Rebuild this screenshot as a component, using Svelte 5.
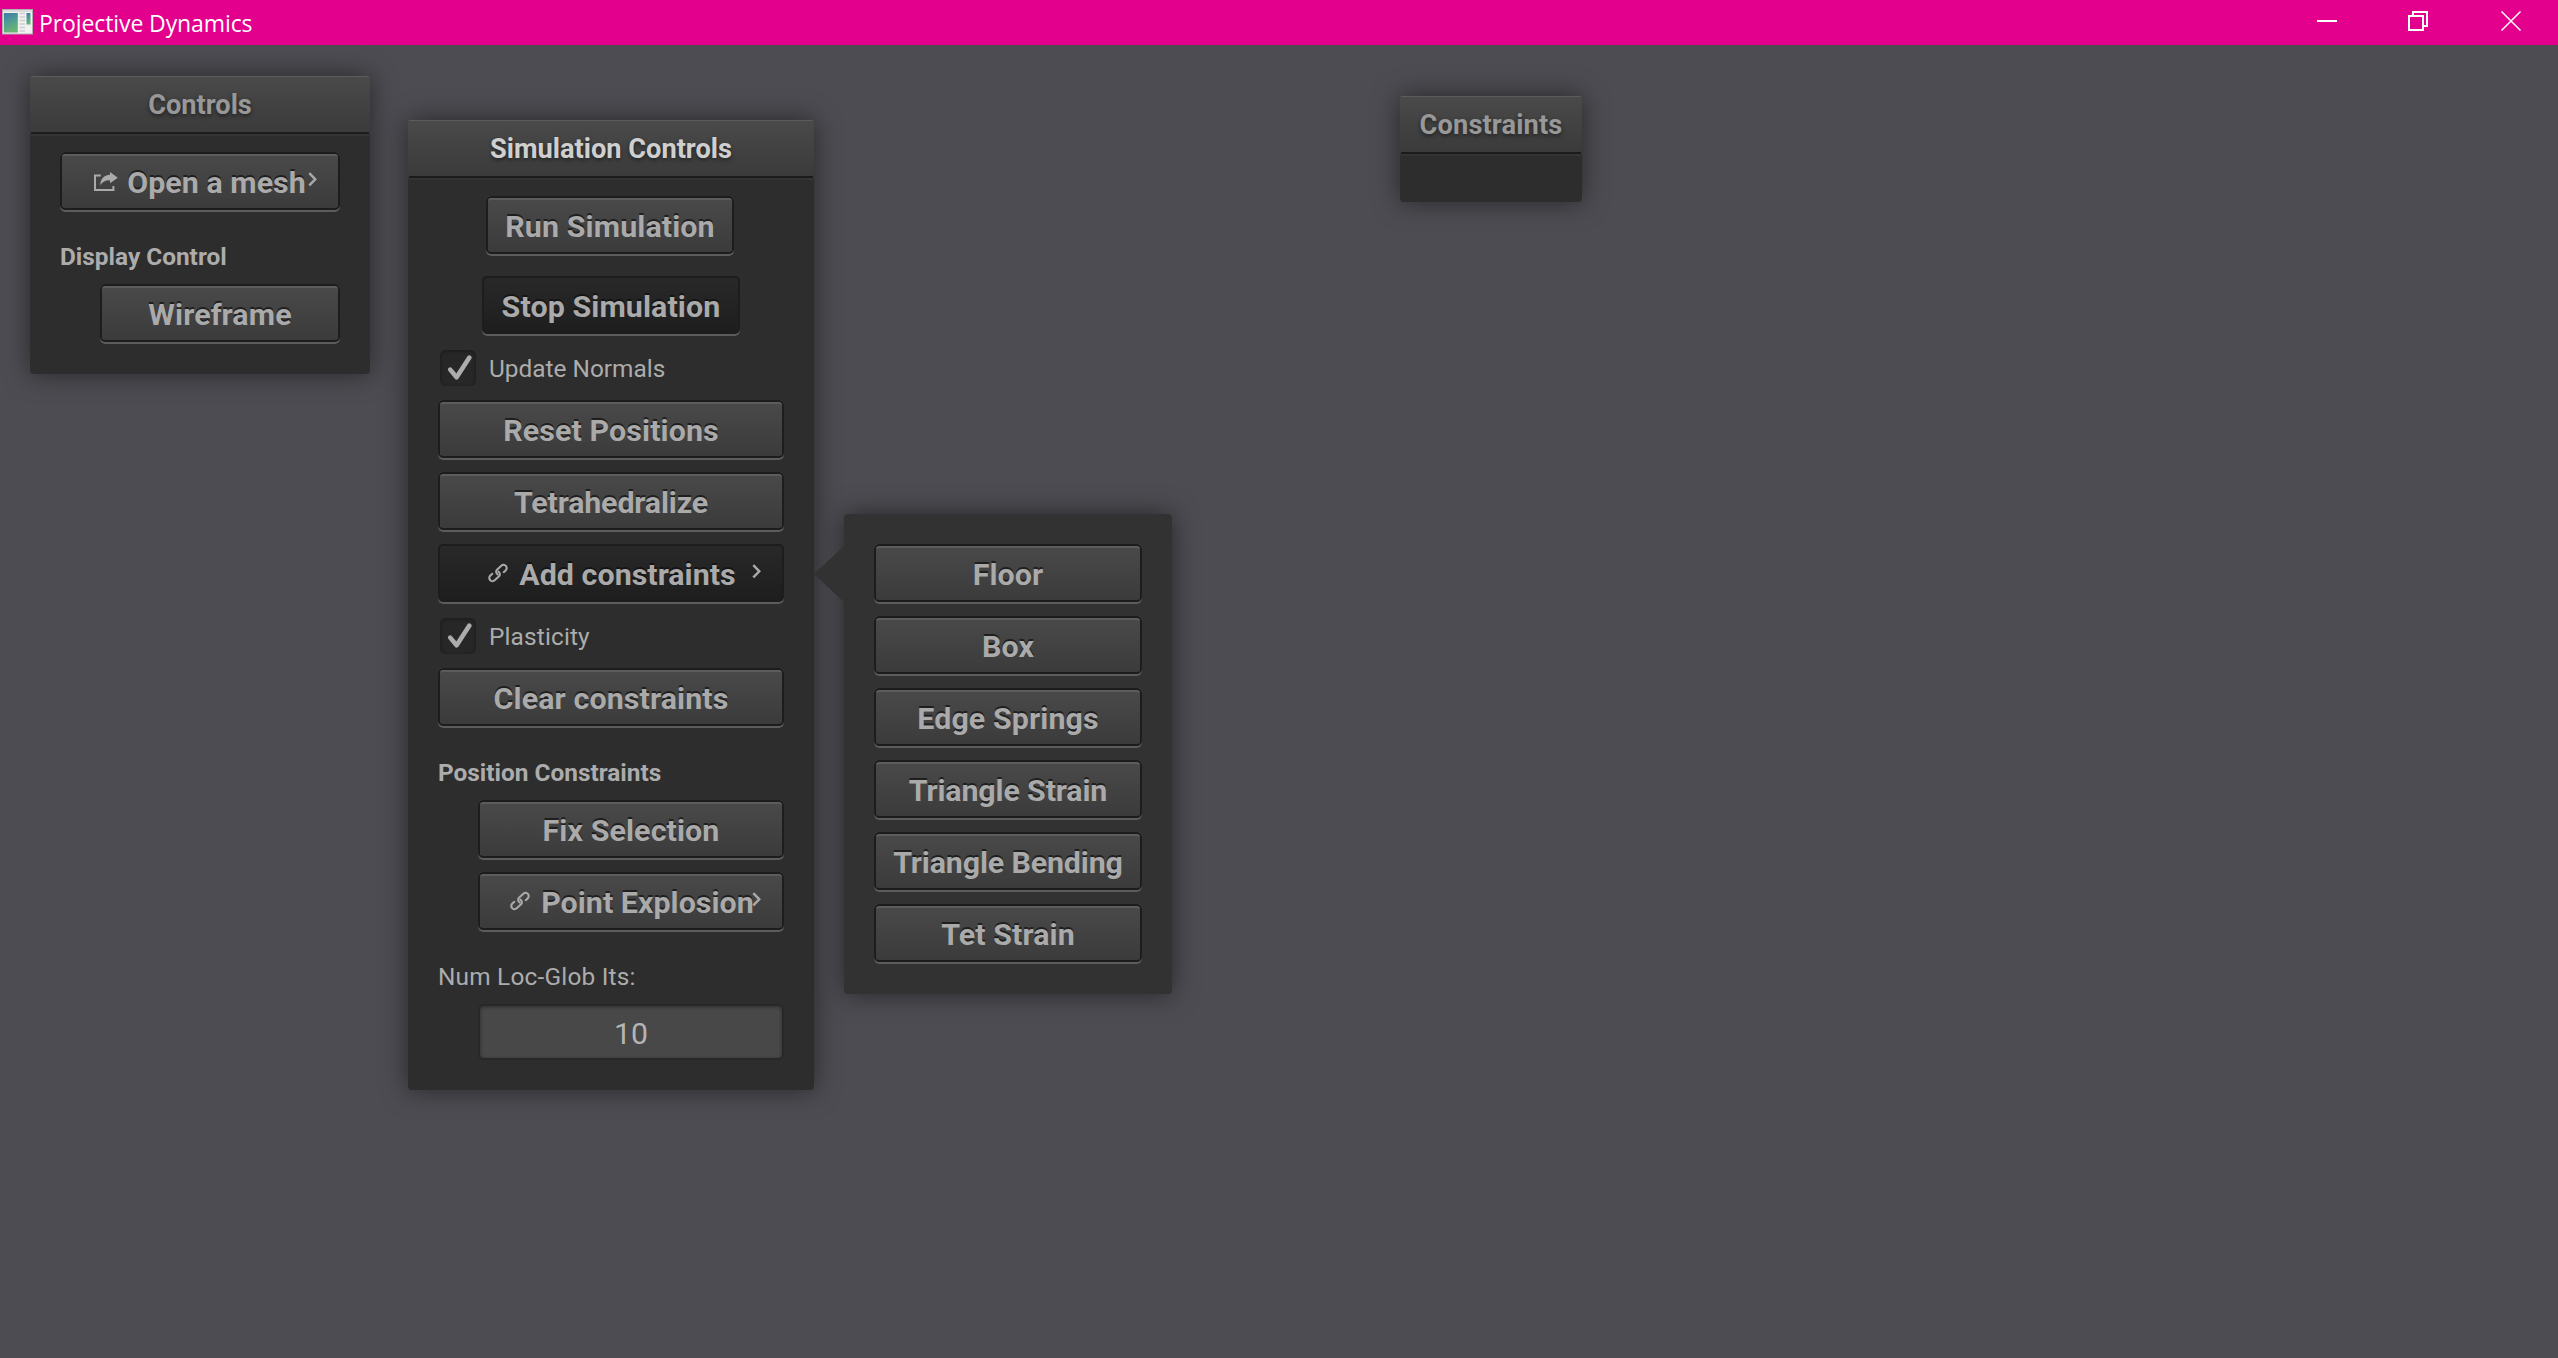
<script>
  const popupItems = [
    { text: 'Floor' },
    { text: 'Box' },
    { text: 'Edge Springs' },
    { text: 'Triangle Strain', snug: true },
    { text: 'Triangle Bending', snug: true },
    { text: 'Tet Strain' }
  ];
</script>

{#snippet share()}
  <svg class="share" viewBox="0 0 24 19" aria-hidden="true">
    <path d="M6.8 3.4H1V18H19.4V14" fill="none" stroke="currentColor" stroke-width="2" />
    <path d="M16 0L23.8 5.7L16 11.2V8.2C11.5 8.1 8.6 9.6 6.2 13.2C6.6 7.2 9.8 3 16 2.7Z" fill="currentColor" />
  </svg>
{/snippet}

{#snippet link()}
  <svg class="link" viewBox="-10 -10 20 20" aria-hidden="true">
    <g transform="rotate(-42)" fill="none" stroke="currentColor" stroke-width="2.1" stroke-linecap="round">
      <path d="M-1.3 0.8A3.2 3.2 0 0 1 1.8 -3.2H7.4A3.2 3.2 0 0 1 7.4 3.2H4.8" />
      <path d="M1.3 -0.8A3.2 3.2 0 0 1 -1.8 3.2H-7.4A3.2 3.2 0 0 1 -7.4 -3.2H-4.8" />
    </g>
  </svg>
{/snippet}

{#snippet chevron()}
  <svg class="chevron" viewBox="0 0 9 15" aria-hidden="true">
    <path d="M1.3 1.2L7.3 7.3L1.3 13.4" fill="none" stroke="currentColor" stroke-width="2.4" />
  </svg>
{/snippet}

{#snippet check(label)}
  <label class="check">
    <span class="box">
      <svg viewBox="0 0 36 36" aria-hidden="true">
        <path d="M10.2 19.6L16.6 27.3L29.4 7.6" fill="none" stroke="currentColor" stroke-width="4.6" stroke-linecap="round" stroke-linejoin="round" />
      </svg>
    </span>
    <span class="check-text">{label}</span>
  </label>
{/snippet}

<div class="screen">
  <header class="titlebar">
    <svg class="app-icon" viewBox="0 0 31 26" aria-hidden="true">
      <defs>
        <linearGradient id="pane" x1="0" y1="0" x2="0.3" y2="1">
          <stop offset="0" stop-color="#3f78a6" />
          <stop offset="0.5" stop-color="#4f9c96" />
          <stop offset="1" stop-color="#68b573" />
        </linearGradient>
      </defs>
      <rect x="0.5" y="0.5" width="30" height="24.5" fill="#f1f1f1" stroke="#b0b0b0" />
      <rect x="1" y="1" width="29" height="2" fill="#dadada" />
      <rect x="1.8" y="4" width="14" height="19.5" fill="url(#pane)" />
      <path d="M17.5 4.5h5.5M17.5 8h5.5M17.5 11.5h5.5M17.5 15h5.5M17.5 18.5h5.5M17.5 22h5.5" stroke="#cfcfcf" stroke-width="1.4" />
      <rect x="24.5" y="4" width="4" height="11.5" fill="url(#pane)" />
    </svg>
    <span class="app-name">Projective Dynamics</span>
    <div class="window-buttons">
      <svg viewBox="0 0 20 20" aria-hidden="true"><path d="M0 10H20" /></svg>
      <svg viewBox="0 0 20 20" aria-hidden="true"><path d="M1 5H15V19H1ZM5 5V1H19V15H15" /></svg>
      <svg class="close" viewBox="0 0 20 20" aria-hidden="true"><path d="M0.5 0.5L19.5 19.5M19.5 0.5L0.5 19.5" /></svg>
    </div>
  </header>

  <main class="desktop">
    <section class="window controls">
      <h2>Controls</h2>
      <div class="body">
        <button class="with-icon">{@render share()}Open a mesh{@render chevron()}</button>
        <h3>Display Control</h3>
        <button class="indent">Wireframe</button>
      </div>
    </section>

    <section class="window simulation focused">
      <h2>Simulation Controls</h2>
      <div class="body">
        <div class="tools">
          <button class="fit">Run Simulation</button>
          <button class="fit wide pushed">Stop Simulation</button>
        </div>
        {@render check('Update Normals')}
        <div class="stack">
          <button>Reset Positions</button>
          <button class="snug">Tetrahedralize</button>
          <button class="with-icon pushed">{@render link()}Add constraints{@render chevron()}</button>
        </div>
        {@render check('Plasticity')}
        <button>Clear constraints</button>
        <h3>Position Constraints</h3>
        <div class="stack indent">
          <button>Fix Selection</button>
          <button class="with-icon">{@render link()}Point Explosion{@render chevron()}</button>
        </div>
        <h3 class="plain">Num Loc-Glob Its:</h3>
        <div class="number indent">10</div>
      </div>
    </section>

    <section class="window popup">
      <div class="stack">
        {#each popupItems as item}
          <button class={{ snug: item.snug }}>{item.text}</button>
        {/each}
      </div>
    </section>

    <section class="window constraints">
      <h2>Constraints</h2>
      <div class="body"></div>
    </section>
  </main>
</div>

<style>
  :global(body) {
    margin: 0;
    background: #4d4c52;
  }

  .screen {
    display: flex;
    flex-direction: column;
    width: 2558px;
    height: 1358px;
    overflow: hidden;
    background: #4d4c52;
    font-family: Roboto, 'Liberation Sans', sans-serif;
    color: #acacac;
  }

  .titlebar {
    display: flex;
    align-items: center;
    box-sizing: border-box;
    flex: none;
    height: 45px;
    padding: 0 37px 0 2px;
    background: #e3008c;
    color: #fff;
  }

  .app-icon {
    width: 31px;
    height: 26px;
    margin-top: -2px;
  }

  .app-name {
    flex: 1;
    margin: 1px 0 0 6px;
    font: 23px/30px 'Open Sans', 'Noto Sans', sans-serif;
    letter-spacing: -0.1px;
  }

  .window-buttons {
    display: flex;
    align-items: center;
    gap: 71px;
    margin-top: -3px;
  }

  .window-buttons svg {
    width: 20px;
    height: 20px;
    fill: none;
    stroke: #fff;
    stroke-width: 2;
    overflow: visible;
  }

  .window-buttons .close {
    margin-left: 2px;
    stroke-width: 1.5;
  }

  .desktop {
    position: relative;
    flex: 1;
  }

  .window {
    position: absolute;
    box-sizing: border-box;
    background: #2d2d2d;
    border-radius: 4px;
    box-shadow: 0 0 26px rgba(0, 0, 0, 0.5);
  }

  .controls {
    left: 30px;
    top: 31px;
    width: 340px;
    height: 298px;
  }

  .simulation {
    left: 408px;
    top: 75px;
    width: 406px;
    height: 970px;
  }

  .popup {
    left: 844px;
    top: 469px;
    width: 328px;
    height: 480px;
    padding: 30px;
    background: #323232;
  }

  .popup::before {
    content: '';
    position: absolute;
    left: -30px;
    top: 32px;
    width: 30px;
    height: 56px;
    background: #323232;
    clip-path: polygon(0 50%, 100% 0, 100% 100%);
  }

  .constraints {
    left: 1400px;
    top: 51px;
    width: 182px;
    height: 106px;
  }

  h2 {
    display: flex;
    align-items: center;
    justify-content: center;
    box-sizing: border-box;
    height: 60px;
    margin: 0;
    padding-bottom: 2px;
    border-radius: 2px 2px 0 0;
    background:
      linear-gradient(#1c1c1c, #1c1c1c) 1px 56px / calc(100% - 2px) 2px no-repeat,
      linear-gradient(#343434, #343434) 1px 58px / calc(100% - 2px) 2px no-repeat,
      linear-gradient(#5c5c5c, #5c5c5c) 0 0 / 100% 1px no-repeat,
      linear-gradient(#4a4a4a, #3a3a3a) 0 0 / 100% 58px no-repeat;
    font-size: 27.2px;
    font-weight: 700;
    line-height: 32px;
    color: #989898;
    text-shadow: 0 2px 4px rgba(0, 0, 0, 0.5);
  }

  .focused h2 {
    color: #cfcfcf;
  }

  .constraints h2 {
    letter-spacing: 0.15px;
  }

  .body {
    display: flex;
    flex-direction: column;
    padding: 16px 30px 30px;
  }

  .tools {
    display: flex;
    flex-direction: column;
    align-items: center;
    gap: 20px;
    margin-bottom: 12px;
  }

  .stack {
    display: flex;
    flex-direction: column;
    gap: 12px;
  }

  button {
    display: flex;
    align-items: center;
    justify-content: center;
    position: relative;
    box-sizing: border-box;
    height: 60px;
    padding: 1px 0 0;
    border: 0;
    border-radius: 5px;
    background: linear-gradient(#4a4a4a, #3a3a3a);
    box-shadow:
      inset 0 -2px #5c5c5c,
      inset 0 0 0 2px #1d1d1d,
      inset 0 -4px #1d1d1d,
      inset 0 4px #5c5c5c;
    font: 700 30.4px/36px Roboto, 'Liberation Sans', sans-serif;
    letter-spacing: 0.1px;
    color: #aaa;
    text-shadow: 0 -2px #1f1f1f;
    white-space: nowrap;
  }

  .pushed {
    background: linear-gradient(#292929, #1d1d1d);
    box-shadow:
      inset 0 -2px #5c5c5c,
      inset 0 0 0 2px #1d1d1d,
      inset 0 -4px #1d1d1d;
    text-shadow: 0 -2px #141414;
  }

  .with-icon {
    letter-spacing: 0.03px;
  }

  .simulation .with-icon {
    padding-left: 2px;
  }

  .snug {
    letter-spacing: -0.15px;
  }

  .fit {
    width: 248px;
    margin-right: 2px;
  }

  .fit.wide {
    width: 258px;
    margin-right: 0;
  }

  .indent {
    margin-left: 40px;
  }

  .share {
    width: 24px;
    height: 19px;
    margin: -2px 9px 0 0;
  }

  .link {
    width: 20px;
    height: 20px;
    margin: -4px 11px 0 0;
    overflow: visible;
  }

  .chevron {
    position: absolute;
    right: 23px;
    top: 20px;
    width: 9px;
    height: 15px;
  }

  h3 {
    box-sizing: border-box;
    height: 72px;
    margin: 0;
    padding-top: 29px;
    font-size: 24.4px;
    font-weight: 700;
    line-height: 32px;
    white-space: nowrap;
  }

  .plain {
    font-weight: 400;
    letter-spacing: 0.2px;
  }

  .check {
    display: flex;
    align-items: center;
    height: 40px;
    padding-left: 2px;
    margin-bottom: 12px;
    font-size: 24.4px;
    line-height: 32px;
  }

  .check-text {
    margin: 2px 0 0 13px;
  }

  .stack + .check {
    margin-top: 12px;
    letter-spacing: 0.15px;
  }

  .box {
    width: 36px;
    height: 36px;
    border-radius: 6px;
    background: #272727;
    box-shadow: inset 0 1px 3px 1px #1e1e1e;
  }

  .box svg {
    display: block;
    width: 36px;
    height: 36px;
  }

  .number {
    display: flex;
    align-items: center;
    justify-content: center;
    box-sizing: border-box;
    height: 56px;
    padding-top: 3px;
    border: 2px solid #282828;
    border-radius: 6px;
    background: #484848;
    box-shadow: inset 0 1px 3px 1px #363636;
    font-size: 30.2px;
    line-height: 36px;
    color: #b4b4b4;
  }
</style>
